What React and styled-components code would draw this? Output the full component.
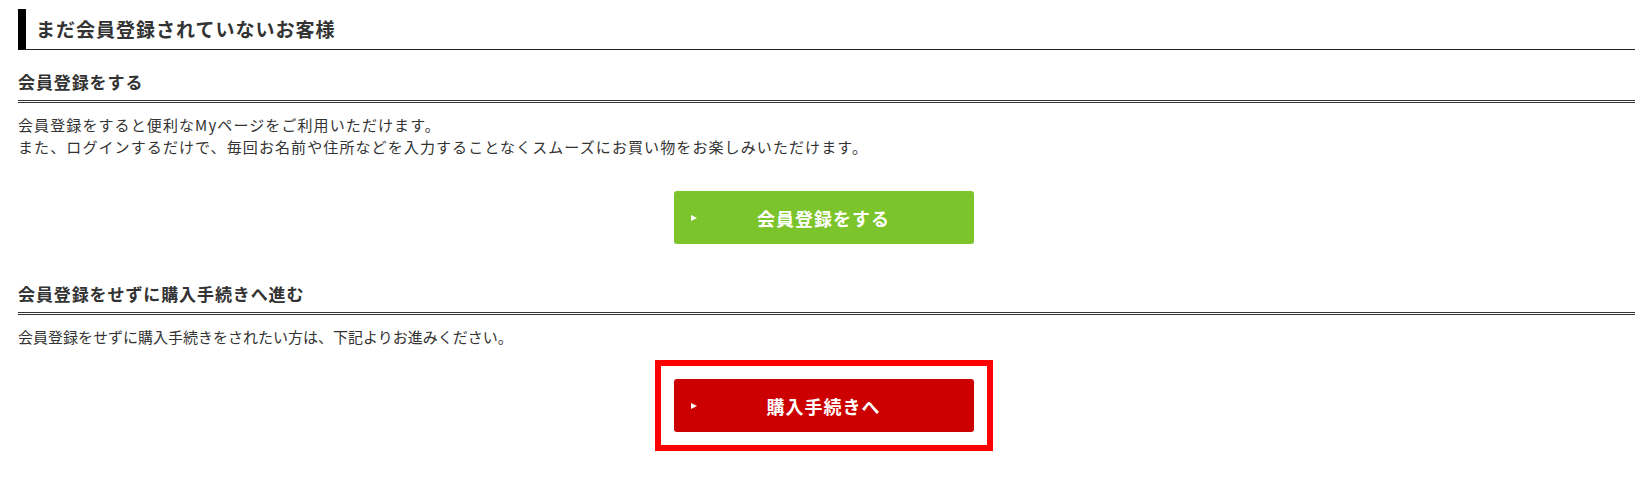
import React from 'react'
import styled, { createGlobalStyle } from 'styled-components'

const GlobalStyle = createGlobalStyle`
  html, body {
    margin: 0;
    padding: 0;
    background: #fff;
  }
  body {
    font-family: "Noto Sans CJK JP", "Noto Sans", sans-serif;
    color: #333;
  }
`

const App = () => {
  return (
    <>
      <GlobalStyle />
      <Wrapper>
        <Title>まだ会員登録されていないお客様</Title>

        <Heading first>会員登録をする</Heading>
        <Text spacing="1.1px">
          会員登録をすると便利なMyページをご利用いただけます。
          <br />
          また、ログインするだけで、毎回お名前や住所などを入力することなくスムーズにお買い物をお楽しみいただけます。
        </Text>
        <ButtonRow gap="33px">
          <Button color="#7cc42c">会員登録をする</Button>
        </ButtonRow>

        <Heading>会員登録をせずに購入手続きへ進む</Heading>
        <Text>会員登録をせずに購入手続きをされたい方は、下記よりお進みください。</Text>
        <ButtonRow gap="12px">
          <Frame>
            <Button color="#cc0000">購入手続きへ</Button>
          </Frame>
        </ButtonRow>
      </Wrapper>
    </>
  )
}

export default App

const Wrapper = styled.div`
  padding: 9px 16px 30px 18px;
`

const Title = styled.h2`
  margin: 0;
  height: 40px;
  line-height: 40px;
  padding-left: 10px;
  border-left: 8px solid #000;
  border-bottom: 1px solid #222;
  font-size: 19px;
  font-weight: 700;
  letter-spacing: 1px;
  color: #333;
`

const Heading = styled.h3`
  margin: ${props => props.first ? '20px' : '38px'} 0 0;
  font-size: 17px;
  line-height: 24px;
  font-weight: 700;
  letter-spacing: 0.9px;
  padding-bottom: 6px;
  border-bottom: 3px double #333;
  color: #333;
`

const Text = styled.p`
  margin: 11px 0 0;
  font-size: 15px;
  line-height: 22px;
  letter-spacing: ${props => props.spacing || '0'};
  color: #333;
`

const ButtonRow = styled.div`
  display: flex;
  justify-content: center;
  margin-top: ${props => props.gap};
  padding-right: 6px;
`

const Frame = styled.div`
  border: 6px solid #ff0000;
  padding: 13px;
`

const Button = styled.a`
  position: relative;
  display: flex;
  align-items: center;
  justify-content: center;
  width: 300px;
  height: 53px;
  border-radius: 3px;
  background: ${props => props.color};
  color: #fff;
  font-size: 18px;
  font-weight: 700;
  letter-spacing: 1px;
  text-decoration: none;
  cursor: pointer;

  &::before {
    content: "";
    position: absolute;
    left: 17px;
    top: 50%;
    margin-top: -3px;
    border-style: solid;
    border-width: 3px 0 3px 6px;
    border-color: transparent transparent transparent #fff;
  }
`
